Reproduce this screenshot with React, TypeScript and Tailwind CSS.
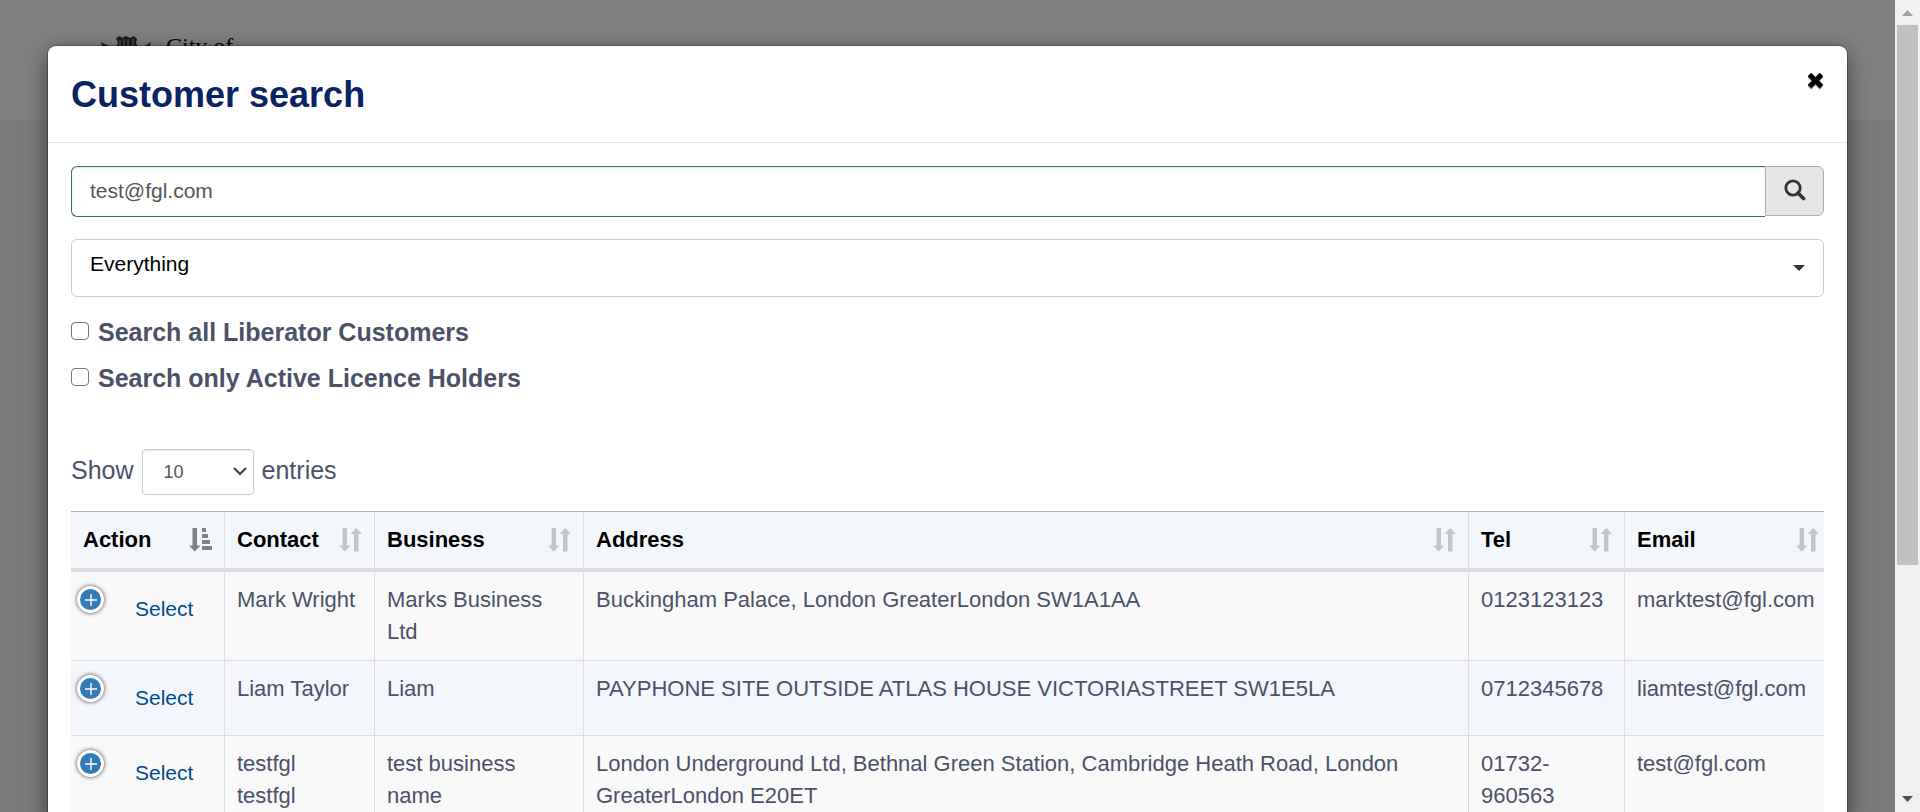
import { ReactNode } from "react";

type Row = { contact: string; business: string; address: string; tel: string; email: string };

const rows: Row[] = [
  { contact: "Mark Wright", business: "Marks Business Ltd", address: "Buckingham Palace, London GreaterLondon SW1A1AA", tel: "0123123123", email: "marktest@fgl.com" },
  { contact: "Liam Taylor", business: "Liam", address: "PAYPHONE SITE OUTSIDE ATLAS HOUSE VICTORIASTREET SW1E5LA", tel: "0712345678", email: "liamtest@fgl.com" },
  { contact: "testfgl testfgl", business: "test business name", address: "London Underground Ltd, Bethnal Green Station, Cambridge Heath Road, London GreaterLondon E20ET", tel: "01732-960563", email: "test@fgl.com" },
];

function SortIcon() {
  return (
    <svg viewBox="0 0 23 24" className="h-6 w-[23px] shrink-0" fill="#c3c6c9" aria-hidden="true">
      <path d="M3.500 0h4.500v17.500h3.500L5.750 23.500 0 17.500h3.500z" />
      <path d="M17.250 0L23 6h-3.500v17.500H15V6h-3.500z" />
    </svg>
  );
}

function SortAscIcon() {
  return (
    <svg viewBox="0 0 23 24" className="h-6 w-[23px] shrink-0" fill="#808184" aria-hidden="true">
      <path d="M3.500 0h4.500v17.500h3.500L5.750 23.500 0 17.500h3.500z" />
      <path d="M13 0h4v4h-4zM13 6h6v4h-6zM13 12h8v4h-8zM13 18h10v4h-10z" />
    </svg>
  );
}

function Th({ children, icon, last }: { children: ReactNode; icon: ReactNode; last?: boolean }) {
  return (
    <th scope="col" className={last ? "h-[60px] border-b-4 border-[#ddd] py-0 pr-[5px] pl-3 text-left" : "h-[60px] border-r border-b-4 border-[#ddd] py-0 pr-3 pl-3 text-left"}>
      <div className="flex items-center justify-between">
        <span>{children}</span>
        {icon}
      </div>
    </th>
  );
}

const cell = "border-r border-b border-[#ddd] py-3 pr-4 pl-3 align-top";

export default function App() {
  return (
    <div className="flex h-screen overflow-hidden bg-[#797a7c] font-['Liberation_Sans',Arial,sans-serif] text-[22px] leading-8 text-[#4b5268]">
      <div className="relative min-w-0 flex-1">
        <header className="h-[120px] bg-[#808080] pt-[30px] pl-[100px]">
          <div className="flex gap-3.5 text-black">
            <svg viewBox="0 0 52 40" className="h-10 w-[52px]" fill="#1c1c1c" aria-hidden="true">
              <path d="M1 12l8 4-6 3zM51 12l-8 5 6 2z" />
              <path d="M16 8l4-2 2 2 4-2 4 2 4-2 3 3-1 4 2 4-4 6H20l-4-6 2-4z" />
              <path d="M20 10v10M24 9v10M28 9v10M33 9v10" stroke="#666" strokeWidth="1" />
            </svg>
            <span className="font-['Liberation_Serif',serif] text-[24px] leading-8">City of</span>
          </div>
        </header>

        <div className="absolute inset-x-0 top-0 px-12 pt-[46px]">
          <section role="dialog" aria-labelledby="title" className="rounded-lg bg-white shadow-[0_0_0_1px_rgba(0,0,0,0.25),0_6px_22px_rgba(0,0,0,0.5)]">
            <div className="flex h-[97px] items-start justify-between border-b border-[#e5e5e5] px-[23px]">
              <h2 id="title" className="pt-[25px] text-[36px] leading-[48px] font-bold text-[#0b2265]">Customer search</h2>
              <button type="button" aria-label="Close" className="pt-[26px]">
                <svg viewBox="0 0 17 18" className="h-[18px] w-[17px]" fill="none" aria-hidden="true">
                  <path d="M2.500 4l12 12M14.500 4l-12 12" stroke="#999" strokeWidth="5" />
                  <path d="M2.500 2.500l12 12M14.500 2.500l-12 12" stroke="#000" strokeWidth="5" />
                </svg>
              </button>
            </div>

            <div className="px-[23px] pt-[23px]">
              <form onSubmit={(e) => e.preventDefault()}>
                <div className="flex items-start">
                  <input aria-label="Search" defaultValue="test@fgl.com" className="h-[51px] min-w-0 flex-1 rounded-l-md border border-r-0 border-[#3c763d] bg-white px-[18px] pb-0.5 text-[21px] text-[#555] shadow-[inset_0_1px_2px_rgba(0,0,0,0.1)] outline-none" />
                  <button type="submit" aria-label="Search customers" className="flex h-[50px] w-[59px] items-center justify-center rounded-r-md border border-[#adadad] bg-[#e6e6e6]">
                    <svg viewBox="0 0 22 22" className="mb-0.5 h-[22px] w-[22px]" fill="none" stroke="#333" aria-hidden="true">
                      <circle cx="9" cy="9" r="7.2" strokeWidth="2.8" />
                      <path d="M14 14l5.500 5.500" strokeWidth="3.8" strokeLinecap="round" />
                    </svg>
                  </button>
                </div>
                <div className="relative mt-[22px]">
                  <select aria-label="Search in" className="block h-[58px] w-full appearance-none rounded-md border border-[#ccc] bg-white pr-12 pb-2 pl-[18px] text-[21px] text-black">
                    <option>Everything</option>
                  </select>
                  <svg viewBox="0 0 12 6" className="pointer-events-none absolute top-[26px] right-[19px] h-1.5 w-3" fill="#333" aria-hidden="true">
                    <path d="M0 0h12L6 6z" />
                  </svg>
                </div>
                <div className="mt-[11px] flex flex-col text-[25px] font-bold">
                  <label className="flex h-[46px] items-center gap-[9px]">
                    <input type="checkbox" className="h-[18px] w-[18px] appearance-none rounded-[4px] border border-[#767676] bg-white" />
                    <span className="pt-0.5">Search all Liberator Customers</span>
                  </label>
                  <label className="flex h-[46px] items-center gap-[9px]">
                    <input type="checkbox" className="h-[18px] w-[18px] appearance-none rounded-[4px] border border-[#767676] bg-white" />
                    <span className="pt-0.5">Search only Active Licence Holders</span>
                  </label>
                </div>
              </form>

              <div className="mt-[49px] flex h-[46px] items-center gap-2 text-[25px]">
                <label htmlFor="count" className="pb-1">Show</label>
                <div className="relative">
                  <select id="count" className="block h-[46px] w-28 appearance-none rounded-[4px] border border-[#ccc] bg-white pl-[21px] text-[18px] text-[#555] shadow-[inset_0_1px_1px_rgba(0,0,0,0.1)]">
                    <option>10</option>
                  </select>
                  <svg viewBox="0 0 14 9" className="pointer-events-none absolute top-[18px] right-[7px] h-[9px] w-3.5" fill="none" stroke="#444" strokeWidth="2.2" aria-hidden="true">
                    <path d="M1 1l6 6 6-6" />
                  </svg>
                </div>
                <span className="pb-1">entries</span>
              </div>

              <table className="mt-4 w-full table-fixed border-separate border-spacing-0 border-t border-[#a3afc4]">
                <colgroup>
                  <col className="w-[154px]" />
                  <col className="w-[150px]" />
                  <col className="w-[209px]" />
                  <col />
                  <col className="w-[156px]" />
                  <col className="w-[199px]" />
                </colgroup>
                <thead className="bg-[#f3f6fb] text-black">
                  <tr>
                    <Th icon={<SortAscIcon />}>Action</Th>
                    <Th icon={<SortIcon />}>Contact</Th>
                    <Th icon={<SortIcon />}>Business</Th>
                    <Th icon={<SortIcon />}>Address</Th>
                    <Th icon={<SortIcon />}>Tel</Th>
                    <Th icon={<SortIcon />} last>Email</Th>
                  </tr>
                </thead>
                <tbody>
                  {rows.map((r) => (
                    <tr key={r.email} className="h-[75px] odd:bg-[#f9f9f9] even:bg-[#f3f6fb]">
                      <td className="border-r border-b border-[#ddd] pt-3.5 pl-[6px] align-top">
                        <div className="flex items-start gap-[31px]">
                          <button type="button" aria-label="Show details" className="flex h-[27px] w-[27px] items-center justify-center rounded-full border-[3px] border-white bg-[#337ab7] shadow-[0_0_4px_#444]">
                            <svg viewBox="0 0 12 12" className="h-3 w-3" stroke="#fff" strokeWidth="1.4" aria-hidden="true">
                              <path d="M6 0v12M0 6h12" />
                            </svg>
                          </button>
                          <a href="#select" className="pt-[7px] text-[21px] leading-8 text-[#004b8d]">Select</a>
                        </div>
                      </td>
                      <td className={cell}>{r.contact}</td>
                      <td className={cell}>{r.business}</td>
                      <td className={cell}>{r.address}</td>
                      <td className={cell}>{r.tel}</td>
                      <td className="border-b border-[#ddd] py-3 pl-3 align-top">{r.email}</td>
                    </tr>
                  ))}
                </tbody>
              </table>
            </div>
          </section>
        </div>
      </div>

      <div className="flex w-[25px] shrink-0 flex-col items-center bg-[#f0f0f0]" aria-hidden="true">
        <svg viewBox="0 0 25 25" className="h-[25px] w-[25px] shrink-0" fill="#a0a0a0">
          <path d="M7 16h11l-5.500-6z" />
        </svg>
        <div className="h-[540px] w-[21px] bg-[#c1c1c1]" />
        <svg viewBox="0 0 25 25" className="mt-auto h-[25px] w-[25px] shrink-0" fill="#505050">
          <path d="M7 9h11l-5.500 6z" />
        </svg>
      </div>
    </div>
  );
}
